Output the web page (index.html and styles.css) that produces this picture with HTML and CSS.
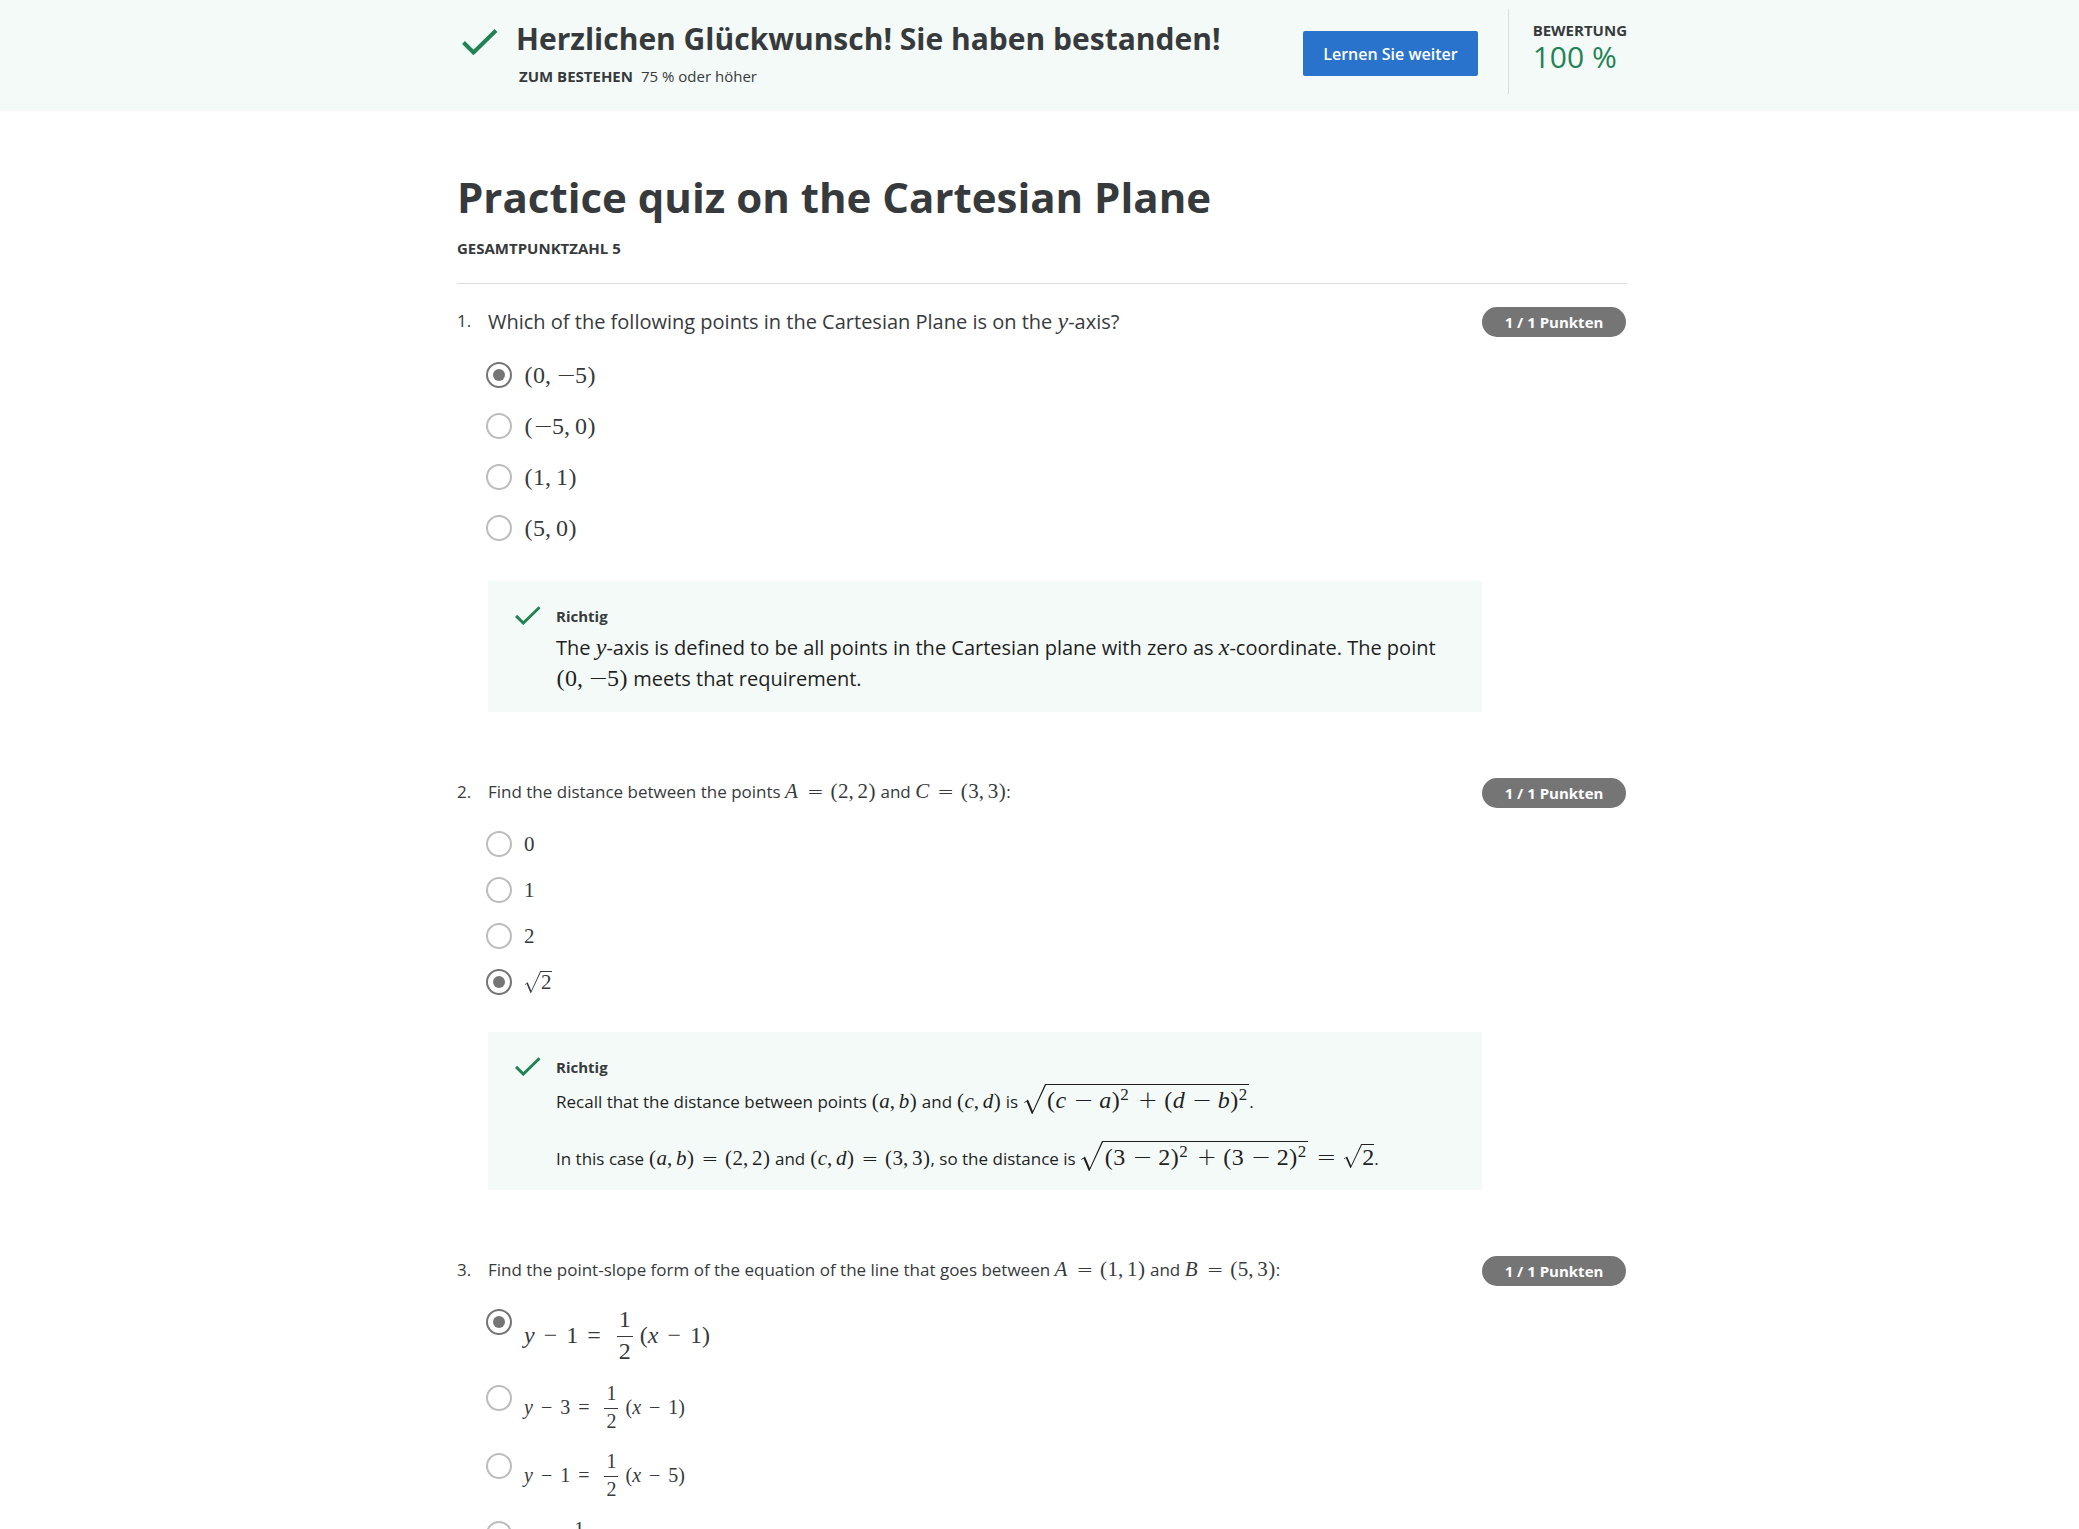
FILE: index.html
```html
<!DOCTYPE html>
<html lang="de">
<head>
<meta charset="utf-8">
<meta name="viewport" content="width=device-width, initial-scale=1">
<title>Practice quiz on the Cartesian Plane</title>
<link rel="stylesheet" href="styles.css">
</head>
<body>
<svg class="sprite" aria-hidden="true">
  <symbol id="check" viewBox="0 0 36 26"><path d="M1.5 13.5 11.5 23.5 34 1.5" fill="none" stroke="currentColor" stroke-width="4"/></symbol>
  <symbol id="surd" viewBox="0 0 23 30" preserveAspectRatio="none"><path d="M1 18.5 5 15.5 9.8 27 22 0H23V1L9.5 30H8.8L3.5 17.5 1.5 19z" fill="currentColor"/></symbol>
</svg>

<header class="banner">
  <div class="banner-inner">
    <svg class="banner-check" aria-hidden="true"><use href="#check"/></svg>
    <div class="banner-text">
      <h2 class="banner-title">Herzlichen Glückwunsch! Sie haben bestanden!</h2>
      <p class="banner-sub"><strong>ZUM BESTEHEN</strong><span>75 % oder höher</span></p>
    </div>
    <button type="button" class="continue">Lernen Sie weiter</button>
    <div class="grade">
      <span class="grade-label">BEWERTUNG</span>
      <span class="grade-value">100 %</span>
    </div>
  </div>
</header>

<main class="quiz">
  <div class="quiz-head">
    <h1 class="quiz-title">Practice quiz on the Cartesian Plane</h1>
    <p class="quiz-total">GESAMTPUNKTZAHL 5</p>
  </div>

  <section class="question">
    <span class="number">1.</span>
    <div class="body">
      <p class="prompt prompt-lg" id="q1">Which of the following points in the Cartesian Plane is on the <span class="math math-lg"><i>y</i></span>-axis?</p>
      <div class="options options-lg" role="radiogroup" aria-labelledby="q1">
        <label class="option"><input type="radio" name="q1" checked><span class="math math-lg"><b>(</b>0<s>,</s><u class="neg">−</u>5<b>)</b></span></label>
        <label class="option"><input type="radio" name="q1"><span class="math math-lg"><b>(</b><u class="neg">−</u>5<s>,</s>0<b>)</b></span></label>
        <label class="option"><input type="radio" name="q1"><span class="math math-lg"><b>(</b>1<s>,</s>1<b>)</b></span></label>
        <label class="option"><input type="radio" name="q1"><span class="math math-lg"><b>(</b>5<s>,</s>0<b>)</b></span></label>
      </div>
      <div class="feedback">
        <svg class="feedback-check" aria-hidden="true"><use href="#check"/></svg>
        <div class="feedback-text feedback-lg">
          <h3>Richtig</h3>
          <p>The <span class="math math-lg"><i>y</i></span>-axis is defined to be all points in the Cartesian plane with zero as <span class="math math-lg"><i>x</i></span>-coordinate. The point <span class="math math-lg"><b>(</b>0<s>,</s><u class="neg">−</u>5<b>)</b></span> meets that requirement.</p>
        </div>
      </div>
    </div>
    <span class="points">1 / 1 Punkten</span>
  </section>

  <section class="question">
    <span class="number">2.</span>
    <div class="body">
      <p class="prompt" id="q2">Find the distance between the points <span class="math"><i class="cap">A</i><u class="rel">=</u><b>(</b>2<s>,</s>2<b>)</b></span> and <span class="math"><i class="cap">C</i><u class="rel">=</u><b>(</b>3<s>,</s>3<b>)</b></span>:</p>
      <div class="options" role="radiogroup" aria-labelledby="q2">
        <label class="option"><input type="radio" name="q2"><span class="math">0</span></label>
        <label class="option"><input type="radio" name="q2"><span class="math">1</span></label>
        <label class="option"><input type="radio" name="q2"><span class="math">2</span></label>
        <label class="option"><input type="radio" name="q2" checked><span class="math"><span class="root root-sm"><svg aria-hidden="true"><use href="#surd"/></svg><span>2</span></span></span></label>
      </div>
      <div class="feedback">
        <svg class="feedback-check" aria-hidden="true"><use href="#check"/></svg>
        <div class="feedback-text feedback-tall">
          <h3>Richtig</h3>
          <p>Recall that the distance between points <span class="math"><b>(</b><i>a</i><s>,</s><i>b</i><b>)</b></span> and <span class="math"><b>(</b><i>c</i><s>,</s><i>d</i><b>)</b></span> is <span class="math math-lg"><span class="root"><svg aria-hidden="true"><use href="#surd"/></svg><span><b>(</b><i>c</i><u>−</u><i>a</i><b>)</b><sup>2</sup><u>+</u><b>(</b><i>d</i><u>−</u><i>b</i><b>)</b><sup>2</sup></span></span></span>.</p>
          <p>In this case <span class="math"><b>(</b><i>a</i><s>,</s><i>b</i><b>)</b><u class="rel">=</u><b>(</b>2<s>,</s>2<b>)</b></span> and <span class="math"><b>(</b><i>c</i><s>,</s><i>d</i><b>)</b><u class="rel">=</u><b>(</b>3<s>,</s>3<b>)</b></span>, so the distance is <span class="math math-lg"><span class="root"><svg aria-hidden="true"><use href="#surd"/></svg><span><b>(</b>3<u>−</u>2<b>)</b><sup>2</sup><u>+</u><b>(</b>3<u>−</u>2<b>)</b><sup>2</sup></span></span><u class="rel">=</u><span class="root root-mid"><svg aria-hidden="true"><use href="#surd"/></svg><span>2</span></span></span>.</p>
        </div>
      </div>
    </div>
    <span class="points">1 / 1 Punkten</span>
  </section>

  <section class="question">
    <span class="number">3.</span>
    <div class="body">
      <p class="prompt" id="q3">Find the point-slope form of the equation of the line that goes between <span class="math"><i class="cap">A</i><u class="rel">=</u><b>(</b>1<s>,</s>1<b>)</b></span> and <span class="math"><i class="cap">B</i><u class="rel">=</u><b>(</b>5<s>,</s>3<b>)</b></span>:</p>
      <div class="options options-frac" role="radiogroup" aria-labelledby="q3">
        <label class="option"><input type="radio" name="q3" checked><span class="eq eq-lg"><span><i>y</i><em>−</em>1<em>=</em></span><span class="frac"><span>1</span><span>2</span></span><span>(<i>x</i><em>−</em>1)</span></span></label>
        <label class="option"><input type="radio" name="q3"><span class="eq"><span><i>y</i><em>−</em>3<em>=</em></span><span class="frac"><span>1</span><span>2</span></span><span>(<i>x</i><em>−</em>1)</span></span></label>
        <label class="option"><input type="radio" name="q3"><span class="eq"><span><i>y</i><em>−</em>1<em>=</em></span><span class="frac"><span>1</span><span>2</span></span><span>(<i>x</i><em>−</em>5)</span></span></label>
        <label class="option"><input type="radio" name="q3"><span class="eq"><span><i>y</i>&nbsp;<em>=</em></span><span class="frac"><span>1</span><span>2</span></span><span><i>x</i></span></span></label>
      </div>
    </div>
    <span class="points">1 / 1 Punkten</span>
  </section>
</main>
</body>
</html>
```
FILE: styles.css
```css
* { box-sizing: border-box; }

body {
  margin: 0;
  background: #fff;
  color: #373a3c;
  font-family: "Open Sans", "Noto Sans", sans-serif;
  font-size: 17px;
}

h1, h2, h3, p { margin: 0; }

.sprite { display: none; }

/* Result banner */
.banner {
  background: #f4faf8;
  padding: 9px 16px 17px 21px;
}

.banner-inner {
  display: flex;
  max-width: 1170px;
  min-height: 85px;
  margin: 0 auto;
  padding-left: 5px;
}

.banner-check {
  width: 36px;
  height: 26px;
  margin: 20px 18px 0 0;
  color: #1f8354;
}

.banner-text { flex: 1; padding-top: 10px; }
.banner-title { font-size: 30px; line-height: 40px; }

.banner-sub {
  display: flex;
  gap: 8px;
  margin-top: 7px;
  padding-left: 3px;
  font-size: 15px;
  line-height: 20px;
}

.continue {
  align-self: flex-start;
  height: 45px;
  margin: 22px 30px 0 0;
  padding: 0 20px;
  border: 0;
  border-radius: 2px;
  background: #2a73cc;
  color: #fff;
  font: 600 16px/24px "Open Sans", sans-serif;
}

.grade {
  display: flex;
  flex-direction: column;
  padding: 11px 0 0 24px;
  border-left: 1px solid #ddd;
}

.grade-label { font-size: 15px; font-weight: 700; line-height: 20px; }
.grade-value { color: #1f8354; font-size: 30px; line-height: 34px; }

/* Quiz page */
.quiz {
  max-width: 1207px;
  margin: 0 auto;
  padding: 58px 16px 60px 21px;
}

.quiz-head { padding-bottom: 25px; border-bottom: 1px solid #ddd; }
.quiz-title { font-size: 42px; line-height: 56px; }
.quiz-total { margin-top: 13px; font-size: 15px; font-weight: 700; line-height: 20px; }

.question {
  display: grid;
  grid-template-columns: 31px 1fr 145px;
  padding-top: 66px;
}

.quiz-head + .question { padding-top: 23px; }

.number { line-height: 28px; }

.points {
  align-self: start;
  margin-right: 1px;
  border-radius: 15px;
  background: #757575;
  color: #fff;
  font-size: 15px;
  font-weight: 700;
  line-height: 30px;
  text-align: center;
}

.prompt { line-height: 28px; }
.prompt-lg { font-size: 20px; line-height: 30px; }

/* Answer options */
.options { margin: 15px 0 27px -2px; }
.options-lg { margin: 12px 0 28px -2px; }

.option {
  display: flex;
  align-items: center;
  gap: 12px;
  height: 46px;
}

.options-lg .option { height: 51px; }

.options-frac { margin-top: 21px; }
.options-frac .option { align-items: flex-start; height: auto; margin-bottom: 16px; }
.options-frac .option input { margin-top: 4px; }

input[type="radio"] {
  display: grid;
  place-items: center;
  appearance: none;
  width: 26px;
  height: 26px;
  margin: 0;
  border: 2px solid #bdbdbd;
  border-radius: 50%;
  background: #fff;
}

input[type="radio"]:checked { border-color: #757575; }

input[type="radio"]:checked::before {
  content: "";
  width: 12px;
  height: 12px;
  border-radius: 50%;
  background: #757575;
}

/* Feedback box */
.feedback {
  display: flex;
  gap: 15px;
  padding: 25px 27px 0;
  background: #f4faf8;
  color: #1f1f1f;
}

.feedback-check {
  flex: none;
  width: 26px;
  height: 19px;
  color: #1f8354;
}

.feedback-text { flex: 1; }
.feedback h3 { margin-bottom: 6px; color: #373a3c; font-size: 15px; line-height: 20px; }
.feedback-lg { padding-bottom: 18px; font-size: 20px; line-height: 31px; }
.feedback-tall { padding-bottom: 13px; line-height: 37px; }
.feedback-tall p + p { margin-top: 20px; }

/* Inline formulas: b = bracket, s = separator, u = operator */
.math {
  font-family: "Liberation Serif", serif;
  font-size: 21px;
  line-height: 1;
  white-space: nowrap;
}

.math b, .math s, .math u {
  display: inline-block;
  font-weight: 400;
  text-align: center;
  text-decoration: none;
}

.math b { width: 8px; }
.math s { width: 9px; text-align: left; }
.math .cap { display: inline-block; width: 15px; }

.math u {
  width: 16px;
  margin: 0 5px;
  font-family: "DejaVu Sans", sans-serif;
  font-weight: 200;
  font-size: 20px;
  line-height: 20px;
}

.math .rel { margin: 0 7px; }
.math .neg { margin: 0; }

.math-lg { font-size: 24px; }
.math-lg b { width: 9px; }
.math-lg s { width: 11px; }
.math-lg u { width: 19px; margin: 0 7px; font-size: 24px; line-height: 24px; }
.math-lg .rel { margin: 0 8px; }

.math sup { margin-right: 2px; font-size: 17px; line-height: 0; vertical-align: 8px; }

.root { display: inline-flex; vertical-align: baseline; align-items: baseline; }
.root svg { width: 23px; height: 30px; align-self: flex-start; }
.root > span { height: 30px; padding: 3px 0 0 1px; border-top: 1px solid currentColor; }
.root-mid svg { width: 19px; height: 24px; }
.root-mid > span { height: 24px; padding: 0; }
.root-sm svg { width: 17px; height: 22px; }
.root-sm > span { height: 22px; padding: 0; }

/* Stacked-fraction equations */
.eq {
  display: flex;
  align-items: center;
  font-family: "Liberation Serif", serif;
  font-size: 20px;
  line-height: 24px;
}

.eq em { margin: 0 8px; font-style: normal; }
.eq-lg { font-size: 24px; line-height: 28px; }
.eq-lg em { margin: 0 9px; }

.frac { display: flex; flex-direction: column; margin: 0 7px; text-align: center; }
.frac span { padding: 0 2px; }
.frac span:first-child { padding-bottom: 3px; border-bottom: 1px solid currentColor; }
```
